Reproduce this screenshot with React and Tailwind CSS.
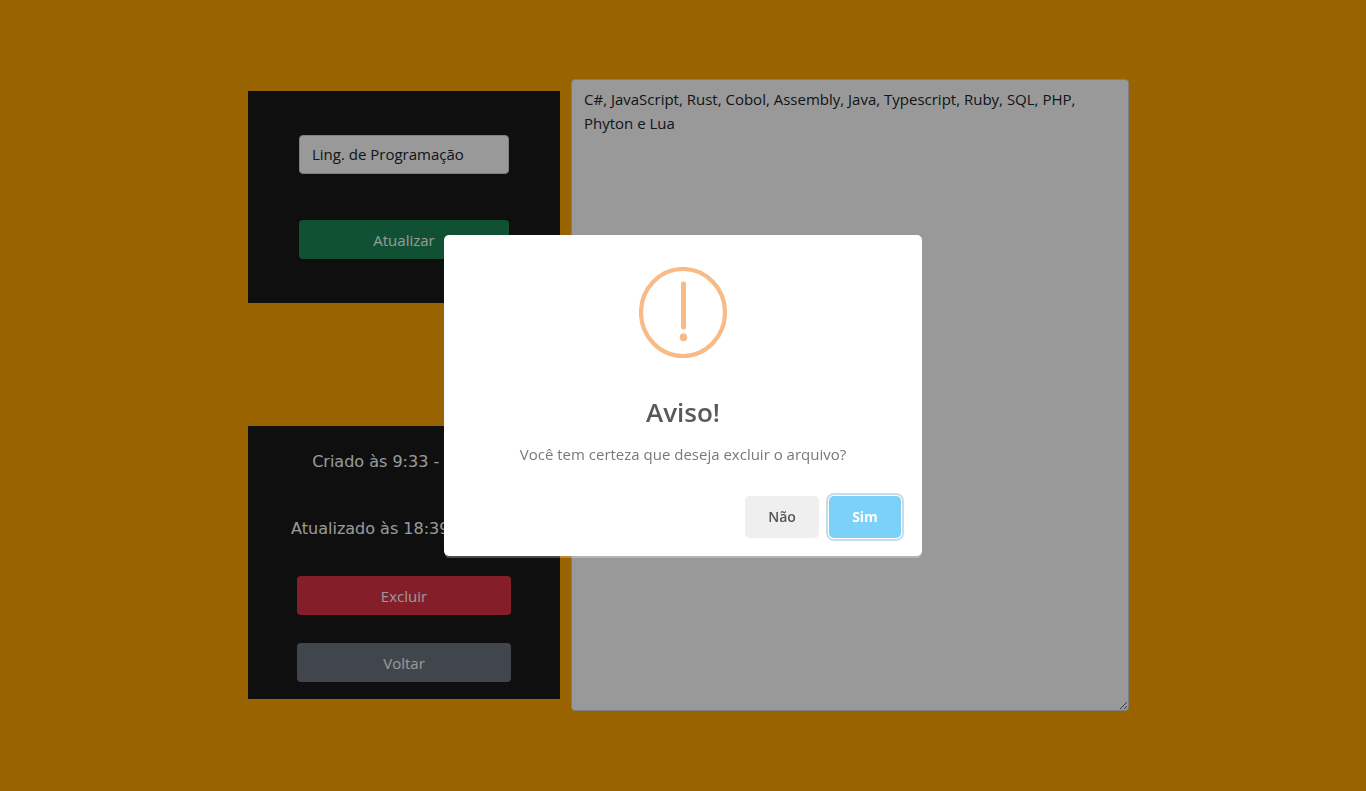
import React from "react";

function WarningIcon() {
  return (
    <svg className="h-[92px] w-[88px]" viewBox="0 0 88 92" fill="none" aria-hidden="true">
      <ellipse cx="44" cy="45.5" rx="42" ry="43.5" stroke="#f8bb86" strokeWidth="4.2" />
      <rect x="42" y="14.5" width="5" height="48" rx="2" fill="#f8bb86" />
      <ellipse cx="44.5" cy="70.3" rx="3.7" ry="4" fill="#f8bb86" />
    </svg>
  );
}

function PanelButton({ className, children }) {
  return (
    <button type="button" className={`h-[39px] w-full rounded pt-0.5 text-[15px] text-white ${className}`}>
      {children}
    </button>
  );
}

function Editor() {
  return (
    <main className="flex min-h-screen items-center justify-center bg-[#ffa500] pb-px pl-[11px]">
      <div className="flex h-[calc(80vh-1px)] w-full max-w-[881px] gap-[11px]">
        <div className="flex w-[312px] shrink-0 flex-col justify-between py-3">
          <section className="flex flex-col gap-[46px] bg-[#191919] px-[51px] py-11">
            <input
              type="text"
              aria-label="Título"
              defaultValue="Ling. de Programação"
              className="h-[39px] w-full rounded border border-[#ced4da] bg-white px-3 pb-0.5 text-[15px] text-[#212529]"
            />
            <PanelButton className="bg-[#198754]">Atualizar</PanelButton>
          </section>
          <section className="flex flex-col items-center gap-7 bg-[#191919] px-[49px] pt-4 pb-[17px]">
            <p className="h-[39px] font-['DejaVu_Sans',sans-serif] text-base leading-[39px] whitespace-nowrap text-white">
              Criado às 9:33 - 3/2/23
            </p>
            <p className="h-[39px] font-['DejaVu_Sans',sans-serif] text-base leading-[39px] whitespace-nowrap text-white">
              Atualizado às 18:39 - 3/2/23
            </p>
            <PanelButton className="bg-[#dc3545]">Excluir</PanelButton>
            <PanelButton className="bg-[#6c757d]">Voltar</PanelButton>
          </section>
        </div>
        <textarea
          aria-label="Conteúdo"
          defaultValue="C#, JavaScript, Rust, Cobol, Assembly, Java, Typescript, Ruby, SQL, PHP, Phyton e Lua"
          className="min-w-0 flex-1 resize rounded border border-[#ced4da] bg-white px-3 py-[7px] text-[15px] leading-6 text-[#212529]"
        />
      </div>
    </main>
  );
}

function ConfirmDialog() {
  return (
    <div className="fixed inset-0 flex items-center justify-center bg-black/40">
      <div
        role="alertdialog"
        aria-modal="true"
        aria-labelledby="dialog-title"
        aria-describedby="dialog-text"
        className="flex w-[478px] flex-col items-center rounded-[5px] bg-white pt-8 pb-[18px] shadow-[0_3px_0_-1px_rgba(255,255,255,0.25)]"
      >
        <WarningIcon />
        <h2 id="dialog-title" className="mt-[35px] text-[26px] leading-9 font-semibold text-[#595959]">
          Aviso!
        </h2>
        <p id="dialog-text" className="mt-3 text-[15px] leading-6 text-[#797979]">
          Você tem certeza que deseja excluir o arquivo?
        </p>
        <div className="mt-[30px] flex gap-[10px] self-end pr-[21px]">
          <button type="button" className="h-[42px] w-[74px] rounded-[5px] bg-[#efefef] text-sm font-semibold text-[#555555]">
            Não
          </button>
          <button
            type="button"
            className="h-[42px] w-[72px] rounded-[5px] bg-[#7cd1f9] text-sm font-bold text-white shadow-[0_0_0_1px_#ffffff,0_0_0_3px_#c8dcea]"
          >
            Sim
          </button>
        </div>
      </div>
    </div>
  );
}

export default function App() {
  return (
    <div className="font-['Open_Sans','Noto_Sans',sans-serif]">
      <Editor />
      <ConfirmDialog />
    </div>
  );
}
